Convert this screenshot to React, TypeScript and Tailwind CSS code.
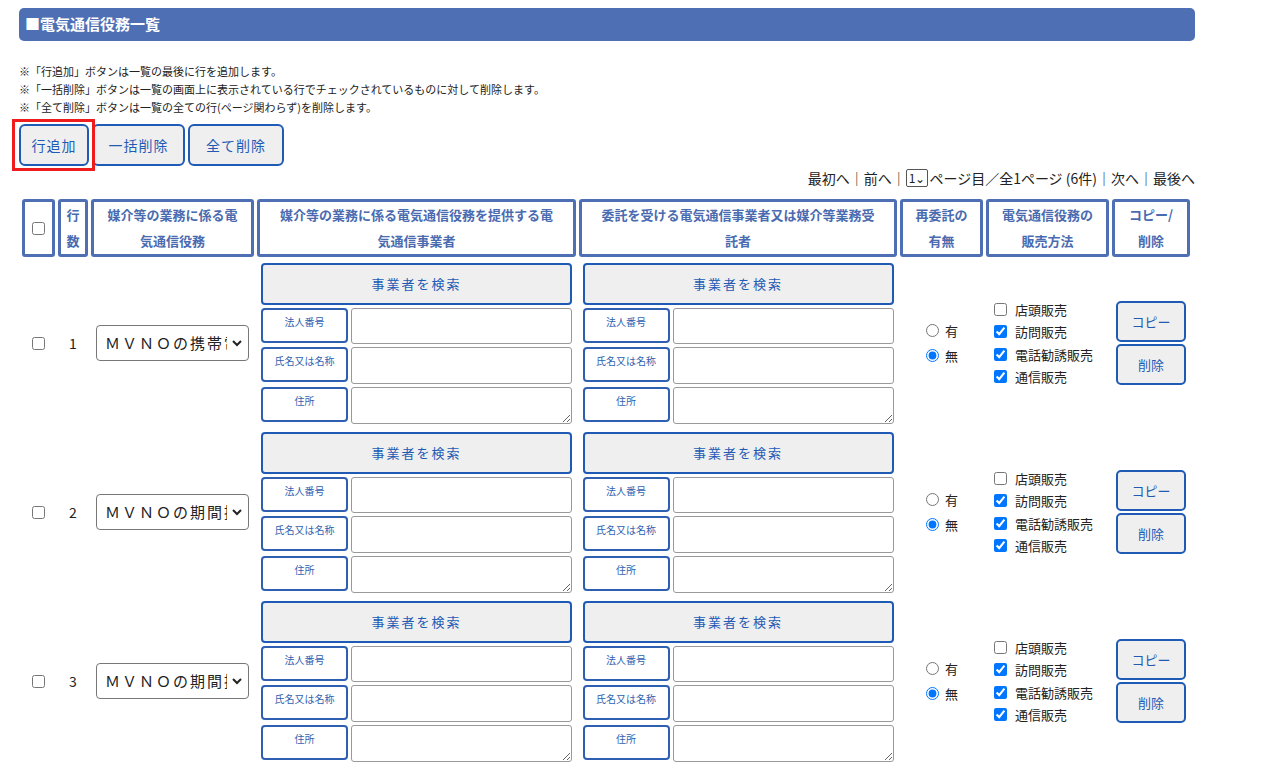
import React from "react";

const font = { fontFamily: '"Noto Sans CJK JP", "Liberation Sans", sans-serif' };

const rows = [
  { no: 1, svc: "ＭＶＮＯの携帯電話" },
  { no: 2, svc: "ＭＶＮＯの期間拘束" },
  { no: 3, svc: "ＭＶＮＯの期間拘束" },
];

function HeadCell({ w, children }: { w: string; children: React.ReactNode }) {
  return (
    <div className={`${w} h-[58px] shrink-0 border-[3px] border-[#4f6fb5] rounded-[3px] flex items-center justify-center text-center text-[13px] font-bold leading-[26px] text-[#4a6bb0]`}>
      {children}
    </div>
  );
}

function Provider() {
  const lbl = "w-[87px] h-[35px] border-2 border-[#2f5fb0] rounded-[4px] text-[10px] text-[#2f5fb0] flex justify-center pt-1 shrink-0";
  const inp = "flex-1 border border-[#999] rounded-[3px] bg-white";
  return (
    <div className="w-[311px] flex flex-col gap-[3px]">
      <button className="h-[42px] border-2 border-[#1f5bb5] rounded-[4px] bg-[#efefef] text-[13px] text-[#1f5bb5] tracking-[2px]">事業者を検索</button>
      <div className="flex gap-[3px] h-[36px] items-start"><div className={lbl}>法人番号</div><div className={`${inp} h-[36px]`} /></div>
      <div className="flex gap-[3px] h-[37px] items-start"><div className={lbl}>氏名又は名称</div><div className={`${inp} h-[37px]`} /></div>
      <div className="flex gap-[3px] h-[37px] items-start"><div className={lbl}>住所</div><textarea className={`${inp} h-[37px] resize-y`} /></div>
    </div>
  );
}

export default function App() {
  const btn = "h-[42px] border-2 border-[#1f5bb5] rounded-[6px] bg-[#efefef] text-[14px] text-[#1f5bb5] tracking-[1px]";
  return (
    <div className="w-[1265px] bg-white text-[#222] pl-[19px] pt-2" style={font}>
      <div className="w-[1176px] h-[33px] bg-[#4f6fb5] rounded-[5px] text-white font-bold text-[15px] flex items-center pl-[6px]">■電気通信役務一覧</div>
      <div className="mt-[21px] text-[11px] leading-[18px]">
        <p>※「行追加」ボタンは一覧の最後に行を追加します。</p>
        <p>※「一括削除」ボタンは一覧の画面上に表示されている行でチェックされているものに対して削除します。</p>
        <p>※「全て削除」ボタンは一覧の全ての行(ページ関わらず)を削除します。</p>
      </div>
      <div className="mt-[8px] flex gap-[3px]">
        <div className="relative">
          <button className={`${btn} w-[70px]`}>行追加</button>
          <div className="absolute -left-[7px] -top-[5px] w-[83px] h-[52px] border-[3px] border-[#ee1c1c] pointer-events-none" />
        </div>
        <button className={`${btn} w-[93px]`}>一括削除</button>
        <button className={`${btn} w-[96px]`}>全て削除</button>
      </div>
      <div className="w-[1176px] flex justify-end items-center text-[14px] mt-[2px] h-[20px]">
        最初へ｜前へ｜
        <span className="border border-[#555] rounded-[2px] h-[18px] px-[2px] flex items-center text-[12px] mr-[1px]">1⌄</span>
        ページ目／全1ページ (6件)｜次へ｜最後へ
      </div>
      <div className="mt-[11px] ml-[3px] flex flex-col">
        <div className="flex gap-[3px]">
          <HeadCell w="w-[33px]"><input type="checkbox" className="w-[13px] h-[13px]" /></HeadCell>
          <HeadCell w="w-[30px]">行<br />数</HeadCell>
          <HeadCell w="w-[163px]">媒介等の業務に係る電<br />気通信役務</HeadCell>
          <HeadCell w="w-[319px]">媒介等の業務に係る電気通信役務を提供する電<br />気通信事業者</HeadCell>
          <HeadCell w="w-[318px]">委託を受ける電気通信事業者又は媒介等業務受<br />託者</HeadCell>
          <HeadCell w="w-[83px]">再委託の<br />有無</HeadCell>
          <HeadCell w="w-[123px]">電気通信役務の<br />販売方法</HeadCell>
          <HeadCell w="w-[78px]">コピー/<br />削除</HeadCell>
        </div>
        {rows.map((r) => (
          <div key={r.no} className="flex items-center gap-[3px] mt-[5px] mb-[2px] h-[162px] text-[13px]">
            <div className="w-[33px] flex justify-center"><input type="checkbox" className="w-[13px] h-[13px]" /></div>
            <div className="w-[30px] text-center text-[14px]">{r.no}</div>
            <div className="w-[163px] flex justify-center">
              <div className="w-[153px] h-[36px] border border-[#777] rounded-[4px] flex items-center pl-[8px] pr-[4px] text-[15px] tracking-[2px]">
                <span className="w-[122px] whitespace-nowrap overflow-hidden">{r.svc}</span>
                <svg width="12" height="12" viewBox="0 0 12 12" className="ml-[4px] shrink-0"><path d="M2 4l4 4 4-4" fill="none" stroke="#222" strokeWidth="2" /></svg>
              </div>
            </div>
            <div className="w-[319px] flex justify-center"><Provider /></div>
            <div className="w-[318px] flex justify-center"><Provider /></div>
            <div className="w-[83px] flex flex-col gap-[6px] pl-[26px] text-[13px]">
              <label className="flex items-center gap-[6px]"><input type="radio" name={`r${r.no}`} className="w-[13px] h-[13px]" />有</label>
              <label className="flex items-center gap-[6px]"><input type="radio" name={`r${r.no}`} defaultChecked className="w-[13px] h-[13px]" />無</label>
            </div>
            <div className="w-[123px] flex flex-col gap-[3px] pl-[8px] text-[13px]">
              {["店頭販売", "訪問販売", "電話勧誘販売", "通信販売"].map((m, i) => (
                <label key={m} className="flex items-center gap-[8px]"><input type="checkbox" defaultChecked={i > 0} className="w-[13px] h-[13px]" />{m}</label>
              ))}
            </div>
            <div className="w-[78px] flex flex-col items-center gap-[2px]">
              <button className="w-[70px] h-[41px] border-2 border-[#1f5bb5] rounded-[5px] bg-[#efefef] text-[13px] text-[#1f5bb5]">コピー</button>
              <button className="w-[70px] h-[41px] border-2 border-[#1f5bb5] rounded-[5px] bg-[#efefef] text-[13px] text-[#1f5bb5]">削除</button>
            </div>
          </div>
        ))}
      </div>
    </div>
  );
}
